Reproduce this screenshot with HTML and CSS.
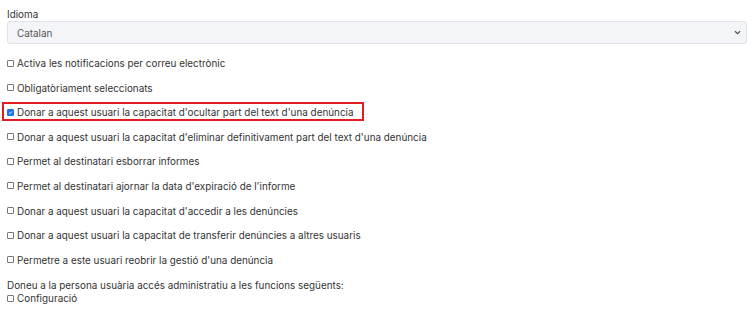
FILE: index.html
```html
<!DOCTYPE html>
<html lang="ca">
<head>
<meta charset="utf-8">
<link rel="stylesheet" href="styles.css">
</head>
<body>
<div class="form">
  <div class="field">
    <label class="label">Idioma</label>
    <div class="select">
      <span>Catalan</span>
      <svg class="chev" width="7" height="5" viewBox="0 0 7 5"><path d="M1 1.2 L3.5 3.6 L6 1.2" fill="none" stroke="#555" stroke-width="1.3"/></svg>
    </div>
  </div>
  <ul class="checks">
    <li class="row"><span class="cb"></span>Activa les notificacions per correu electrònic</li>
    <li class="row"><span class="cb"></span>Obligatòriament seleccionats</li>
    <li class="row highlight"><span class="cb checked"><svg width="7" height="7" viewBox="0 0 7 7"><path d="M1.5 3.6 L3 5 L5.6 2" fill="none" stroke="#fff" stroke-width="1.2"/></svg></span>Donar a aquest usuari la capacitat d'ocultar part del text d'una denúncia</li>
    <li class="row"><span class="cb"></span>Donar a aquest usuari la capacitat d'eliminar definitivament part del text d'una denúncia</li>
    <li class="row"><span class="cb"></span>Permet al destinatari esborrar informes</li>
    <li class="row"><span class="cb"></span>Permet al destinatari ajornar la data d'expiració de l'informe</li>
    <li class="row"><span class="cb"></span>Donar a aquest usuari la capacitat d'accedir a les denúncies</li>
    <li class="row"><span class="cb"></span>Donar a aquest usuari la capacitat de transferir denúncies a altres usuaris</li>
    <li class="row"><span class="cb"></span>Permetre a este usuari reobrir la gestió d'una denúncia</li>
  </ul>
  <div class="admin">
    <p class="admin-title">Doneu a la persona usuària accés administratiu a les funcions següents:</p>
    <div class="admin-row"><span class="cb"></span>Configuració</div>
  </div>
</div>
</body>
</html>
```
FILE: styles.css
```css
html, body {
  margin: 0;
  padding: 0;
  background: #fff;
}
body {
  font-family: Inter, "Noto Sans", "DejaVu Sans", sans-serif;
  font-size: 9.9px;
  color: #333;
}
.form {
  padding: 8px 5px 0 7px;
}
.field {
  display: flex;
  flex-direction: column;
}
.label {
  line-height: 12px;
  margin-bottom: 1px;
}
.select {
  height: 23px;
  box-sizing: border-box;
  border: 1px solid #dfe2e8;
  border-radius: 3px;
  background: #f4f5f9;
  display: flex;
  align-items: center;
  justify-content: space-between;
  padding: 0 5px 0 9px;
  color: #555;
}
.checks {
  list-style: none;
  margin: 13px 0 0;
  padding: 0;
  display: flex;
  flex-direction: column;
  gap: 12.6px;
}
.row {
  display: flex;
  align-items: center;
  line-height: 12px;
}
.highlight {
  width: max-content;
  border: 2px solid #e31b23;
  padding: 2px 8px 1px 3px;
  margin: -4px 0 -3px -5px;
}
.cb {
  width: 7px;
  height: 7px;
  box-sizing: border-box;
  border: 1px solid #777;
  border-radius: 1px;
  margin-right: 3px;
  flex: none;
  display: inline-flex;
  align-items: center;
  justify-content: center;
}
.cb.checked {
  background: #1a73e8;
  border-color: #1a73e8;
}
.cb.checked svg {
  display: block;
}
.admin {
  margin-top: 13px;
}
.admin-title {
  margin: 0;
  line-height: 13px;
}
.admin-row {
  display: flex;
  align-items: center;
  line-height: 13px;
}
```
